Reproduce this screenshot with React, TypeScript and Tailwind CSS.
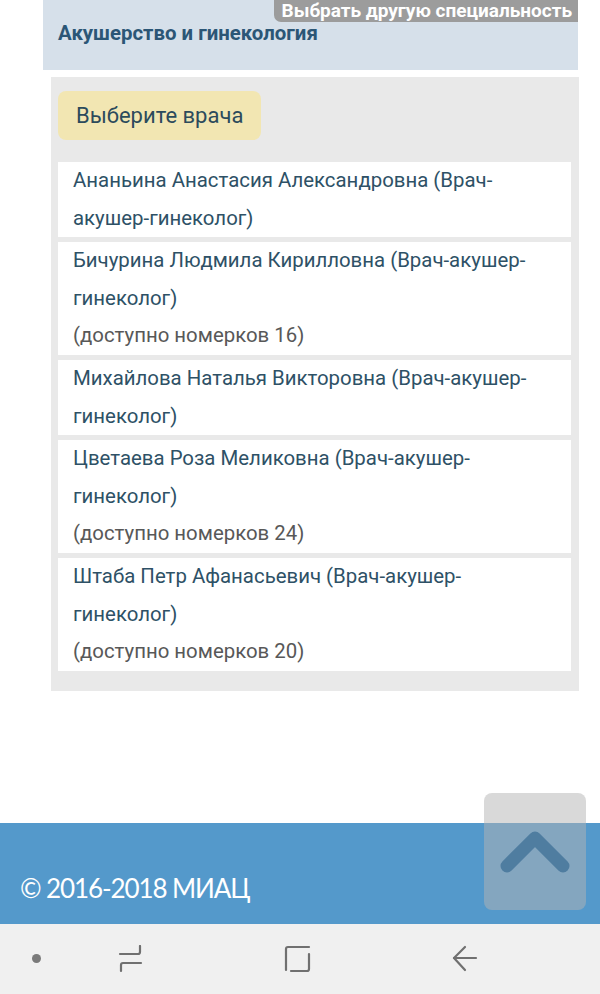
const doctors = [
  { name: "Ананьина Анастасия Александровна (Врач-акушер-гинеколог)", free: null },
  { name: "Бичурина Людмила Кирилловна (Врач-акушер-гинеколог)", free: 16 },
  { name: "Михайлова Наталья Викторовна (Врач-акушер-гинеколог)", free: null },
  { name: "Цветаева Роза Меликовна (Врач-акушер-гинеколог)", free: 24 },
  { name: "Штаба Петр Афанасьевич (Врач-акушер-гинеколог)", free: 20 },
];

function NavBar() {
  return (
    <div className="h-[70px] bg-[#f0f0f0] relative">
      <div className="absolute left-[32px] top-[30px] w-[9px] h-[9px] rounded-full bg-[#7a7a7a]" />
      <svg className="absolute left-[118px] top-[21px]" width="25" height="28" viewBox="0 0 25 28" fill="none" stroke="#707070" strokeWidth="2.2" strokeLinecap="round" strokeLinejoin="round">
        <path d="M2 9 H20 Q22 9 22 7 V1" />
        <path d="M23 18 H5 Q3 18 3 20 V26" />
      </svg>
      <svg className="absolute left-[284px] top-[21px]" width="27" height="28" viewBox="0 0 27 28" fill="none" stroke="#707070" strokeWidth="2.2" strokeLinecap="round" strokeLinejoin="round">
        <path d="M25 2 H4 Q2 2 2 4 V25" />
        <path d="M7 26 H23 Q25 26 25 24 V9" />
      </svg>
      <svg className="absolute left-[451px] top-[21px]" width="27" height="28" viewBox="0 0 27 28" fill="none" stroke="#707070" strokeWidth="2.2" strokeLinecap="round" strokeLinejoin="round">
        <path d="M14 2 L3 13 L14 25" />
        <path d="M3 13 H25" />
      </svg>
    </div>
  );
}

export default function App() {
  return (
    <div className="relative h-[994px] w-[600px] flex flex-col bg-white font-['Roboto',sans-serif] overflow-hidden">
      <div className="ml-[43px] w-[535px] h-[70px] bg-[#d6e0ea] relative">
        <div className="absolute right-0 top-0 h-[22px] pl-[8px] pr-[6px] bg-[#9c9c9c] rounded-bl-[7px] text-white font-bold text-[19px] leading-[22px]">
          Выбрать другую специальность
        </div>
        <div className="pl-[15px] pt-[20px] text-[20.4px] leading-[26px] font-bold text-[#2b5676]">
          Акушерство и гинекология
        </div>
      </div>

      <div className="ml-[51px] mt-[7px] w-[528px] bg-[#e9e9e9] pt-[14px] pb-[20px] pl-[7px] pr-[8px]">
        <div className="inline-block h-[49px] px-[18px] rounded-[8px] bg-[#f2e6b2] text-[22px] leading-[49px] text-[#2c4b5c]">
          Выберите врача
        </div>
        <div className="mt-[22px] flex flex-col gap-[5px]">
          {doctors.map((d, i) => (
            <div key={i} className="bg-white pl-[15px] pr-[40px] text-[20.4px] leading-[37.6px]">
              <div className="text-[#2e5166]">{d.name}</div>
              {d.free !== null && <div className="text-[#585858]">(доступно номерков {d.free})</div>}
            </div>
          ))}
        </div>
      </div>

      <div className="flex-1" />

      <div className="h-[101px] bg-[#5499cb] flex items-end pl-[20px] pb-[20px]">
        <span className="text-white text-[26px] leading-[32px] font-['Lato',sans-serif] tracking-[-1.1px]">© 2016-2018 МИАЦ</span>
      </div>

      <NavBar />

      <div className="absolute left-[484px] top-[793px] w-[102px] h-[117px] rounded-[8px] bg-[#b4b4b4]/50 flex items-center justify-center">
        <svg width="80" height="50" viewBox="0 0 80 50" className="mt-[2px]">
          <path d="M12 38 L40 10 L68 38" fill="none" stroke="#4f7da0" strokeWidth="13" strokeLinecap="round" strokeLinejoin="round" />
        </svg>
      </div>
    </div>
  );
}
